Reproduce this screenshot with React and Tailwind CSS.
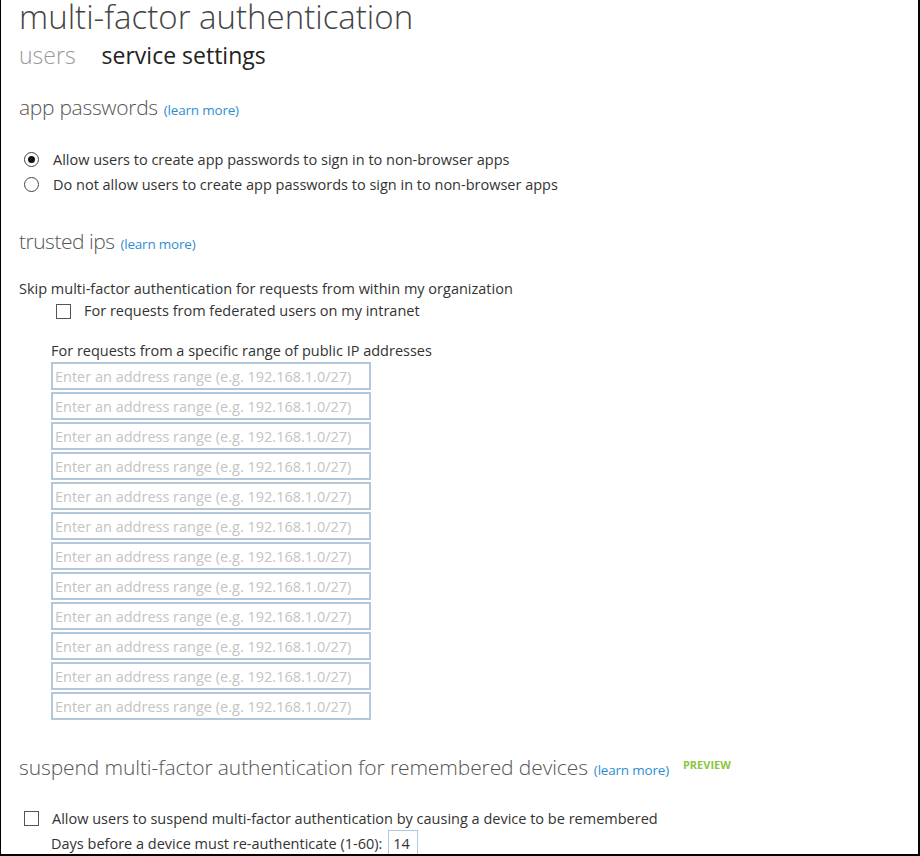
const sans = { fontFamily: '"Open Sans", "Noto Sans", sans-serif' };

function LearnMore() {
  return (
    <a href="#" className="ml-[6px] text-[13.5px] font-normal tracking-[-0.2px] text-[#2f8ed2]">
      (learn more)
    </a>
  );
}

function Checkbox() {
  return (
    <span className="inline-block h-[15px] w-[15px] shrink-0 border border-[#555] bg-white" />
  );
}

function Radio({ checked }) {
  return (
    <span className="flex h-[15px] w-[15px] shrink-0 items-center justify-center rounded-full border border-[#444] bg-white">
      {checked && <span className="h-[7px] w-[7px] rounded-full bg-[#111]" />}
    </span>
  );
}

export default function App() {
  const ranges = Array.from({ length: 12 });

  return (
    <div
      className="h-[856px] w-[920px] overflow-hidden border-b-2 border-l border-r-2 border-black bg-white text-[#333]"
      style={sans}
    >
      <div className="pl-[18px]">
        <h1 className="text-[33px] font-light leading-[34px] text-[#444]">
          multi-factor authentication
        </h1>
        <div className="mt-[5px] flex items-baseline gap-[26px] text-[23px] leading-[32px]">
          <span className="font-light text-[#999]">users</span>
          <span className="text-[#222]">service settings</span>
        </div>

        <h2 className="mt-[21px] flex items-baseline text-[21px] font-light leading-[30px] tracking-[-0.3px] text-[#555]">
          app passwords
          <LearnMore />
        </h2>

        <div className="mt-[22px] flex flex-col text-[14.5px] leading-[25px]">
          <label className="flex items-center gap-[14px] pl-[5px]">
            <Radio checked />
            Allow users to create app passwords to sign in to non-browser apps
          </label>
          <label className="flex items-center gap-[14px] pl-[5px]">
            <Radio />
            Do not allow users to create app passwords to sign in to non-browser apps
          </label>
        </div>

        <h2 className="mt-[29px] flex items-baseline text-[21px] font-light leading-[30px] tracking-[-0.5px] text-[#555]">
          trusted ips
          <LearnMore />
        </h2>

        <p className="mt-[19px] text-[14.5px] leading-[22px]">
          Skip multi-factor authentication for requests from within my organization
        </p>
        <label className="flex items-center gap-[13px] pl-[37px] text-[14.5px] leading-[22px]">
          <Checkbox />
          For requests from federated users on my intranet
        </label>

        <div className="mt-[18px] pl-[32px]">
          <p className="text-[14.5px] leading-[22px]">
            For requests from a specific range of public IP addresses
          </p>
          <div className="flex flex-col gap-[2px]">
            {ranges.map((_, i) => (
              <input
                key={i}
                type="text"
                placeholder="Enter an address range (e.g. 192.168.1.0/27)"
                className="h-[28px] w-[320px] border-2 border-[#b4c8dc] bg-white px-[2px] text-[14.5px] text-[#333] placeholder:text-[#c4c4c4] focus:outline-none"
                style={sans}
              />
            ))}
          </div>
        </div>

        <h2 className="mt-[32px] flex items-baseline text-[21px] font-light leading-[30px] tracking-[-0.1px] text-[#555]">
          suspend multi-factor authentication for remembered devices
          <LearnMore />
          <span className="ml-[14px] -translate-y-[6px] text-[11px] font-bold tracking-normal text-[#8cc63f]">
            PREVIEW
          </span>
        </h2>

        <div className="mt-[20px] text-[14.5px] leading-[25px]">
          <label className="flex items-center gap-[13px] pl-[5px]">
            <Checkbox />
            Allow users to suspend multi-factor authentication by causing a device to be remembered
          </label>
          <div className="-mt-[1px] flex items-center gap-[6px] pl-[32px]">
            Days before a device must re-authenticate (1-60):
            <input
              type="text"
              defaultValue="14"
              className="h-[26px] w-[30px] border border-[#b4c8dc] bg-white px-[4px] text-[14.5px] text-[#333] focus:outline-none"
              style={sans}
            />
          </div>
        </div>
      </div>
    </div>
  );
}
